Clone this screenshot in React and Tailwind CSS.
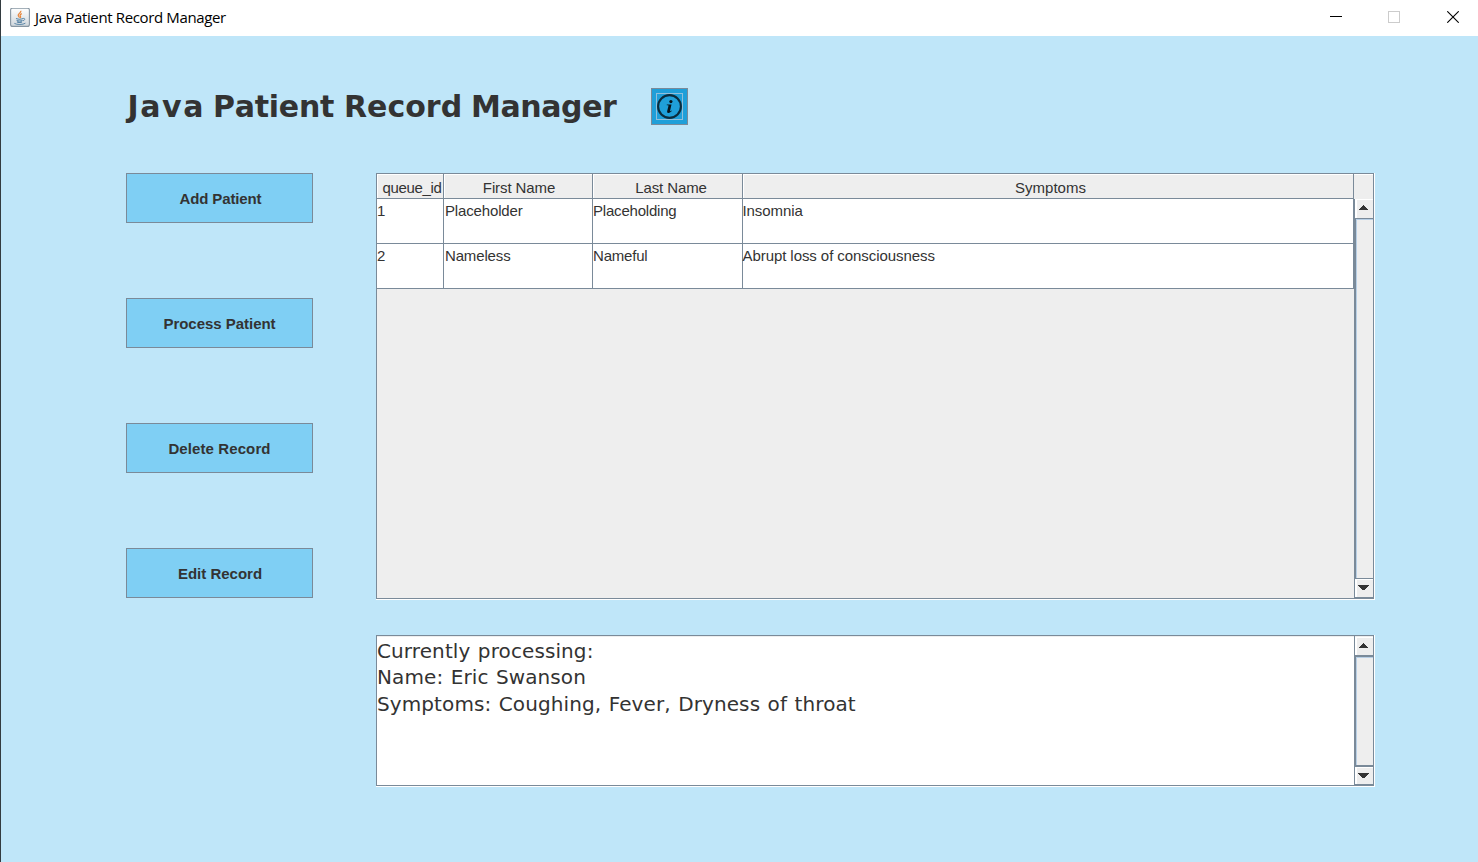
import React from "react";

const titleWords = [
  { text: "Java ", style: "ml-[1.5px] w-[85.5px] tracking-[1.6px]" },
  { text: "Patient ", style: "w-[131px] tracking-[-0.25px]" },
  { text: "Record ", style: "w-[127px]" },
  { text: "Manager", style: "tracking-[-0.4px]" },
];

const headers = [
  { label: "queue_id", cell: "pl-[3px] tracking-[-0.33px]" },
  { label: "First Name", cell: "pl-px tracking-[-0.1px]" },
  { label: "Last Name", cell: "pl-[6px] tracking-[-0.1px]" },
  { label: "Symptoms", cell: "pl-[4px]" },
];

const rows = [
  ["1", "Placeholder", "Placeholding", "Insomnia"],
  ["2", "Nameless", "Nameful", "Abrupt loss of consciousness"],
];

const cellPad = ["tracking-normal", "pl-px tracking-[-0.15px]", "tracking-[-0.2px]", "-indent-[0.5px] tracking-[-0.07px]"];

const actions = [
  { label: "Add Patient", pad: "pl-[2px] tracking-[-0.12px]" },
  { label: "Process Patient", pad: "tracking-[-0.03px]" },
  { label: "Delete Record", pad: "tracking-[0.1px]" },
  { label: "Edit Record", pad: "pl-px" },
];

function JavaIcon() {
  return (
    <svg width="20" height="20" viewBox="0 0 20 20" className="shrink-0" aria-hidden="true">
      <defs>
        <linearGradient id="plate" x1="0" y1="0" x2="0" y2="1">
          <stop offset="0" stopColor="#ffffff" />
          <stop offset="1" stopColor="#cfd6dc" />
        </linearGradient>
      </defs>
      <rect x="0.6" y="0.1" width="18.8" height="18.3" rx="2" fill="url(#plate)" stroke="#8796a3" strokeWidth="1.1" />
      <path d="M10.8 2.8c1 1.700-3.200 2.800-2.600 4.700.2.800 1.100 1.300 1.200 2.300M11.800 5.600c-1.800.8-2.200 1.700-1.300 2.700.4.600.1 1.200-.5 1.700" fill="none" stroke="#e8853a" strokeWidth="1.2" />
      <path d="M6 10.600c1.800.6 5.400.6 7.200 0M6.600 12.400c1.700.6 4.300.6 6 0M7 14c1.600.6 3.700.6 5 0" fill="none" stroke="#5b87a8" strokeWidth="1.1" />
      <path d="M13.200 10.400c2-.4 2.300 1.500-.2 2.400M4.400 15.400c2.400 1.500 8.700 1.400 11-.2" fill="none" stroke="#5b87a8" strokeWidth="1" />
    </svg>
  );
}

function InfoIcon() {
  return (
    <svg width="25" height="25" viewBox="0 0 25 25" aria-hidden="true">
      <circle cx="12.5" cy="12.5" r="11.4" fill="none" stroke="#0b2c3d" strokeWidth="2.1" />
      <circle cx="13.9" cy="7.6" r="1.6" fill="#06141c" />
      <path d="M9.800 10.600h4.700l-1.500 6.300c-.1.600.6.500 1.500-.3l.3.500c-1.200 1.300-2.200 1.900-3.400 1.800-1.200-.1-1.500-.9-1.200-2l1.300-5.100c.1-.5-.5-.6-1.700-.6z" fill="#06141c" />
    </svg>
  );
}

function Arrow({ down }) {
  return (
    <svg width="11" height="5" viewBox="0 0 11 5" shapeRendering="crispEdges" aria-hidden="true">
      <path d={down ? "M0 0h11v1h-1v1h-1v1h-1v1h-1v1H4V4H3V3H2V2H1V1H0z" : "M5 0h1v1h1v1h1v1h1v1h1v1H1V4h1V3h1V2h1V1h1z"} fill="#333333" />
    </svg>
  );
}

function ScrollBar({ table }) {
  return (
    <div className="flex w-[19px] shrink-0 flex-col border-l border-[#7a8a99] bg-[#eeeeee]">
      <div className={(table ? "h-[19px]" : "mt-px h-[18px]") + " flex shrink-0 items-start justify-center border-l-2 border-t border-white pr-[3px] pt-[5px]"}>
        <Arrow />
      </div>
      <div className={(table ? "border-t" : "border-t-2") + " flex grow flex-col border-l border-[#7a8a99]"}>
        <div className={(table ? "border-b" : "border-b-2") + " flex grow flex-col border-[#7a8a99]"}>
          <div className="grow border-l border-t border-[#b8cfe5]" />
        </div>
      </div>
      <div className={(table ? "h-[18px]" : "h-[17px]") + " flex shrink-0 items-start justify-center border-l-2 border-t border-white pr-[3px] pt-[5px]"}>
        <Arrow down />
      </div>
      <div className="h-px shrink-0 bg-[#7a8a99]" />
    </div>
  );
}

export default function App() {
  return (
    <div className="flex h-[862px] w-[1478px] flex-col overflow-hidden border-l border-[#333b40] bg-[#bfe6f9] font-['Liberation_Sans',sans-serif] text-[15px] text-[#333333]">
      <header className="flex h-9 shrink-0 items-center bg-white pl-[9px]">
        <JavaIcon />
        <span className="ml-[5px] whitespace-nowrap pb-[2px] font-['Open_Sans',sans-serif] text-[15px] tracking-[-0.36px] text-black">Java Patient Record Manager</span>
        <div className="ml-auto flex items-center pb-[2px] pr-[19px]">
          <svg width="12" height="12" className="mr-[46px]" shapeRendering="crispEdges" aria-hidden="true"><rect y="5" width="12" height="1" fill="#000" /></svg>
          <svg width="12" height="12" className="mr-[47px]" shapeRendering="crispEdges" aria-hidden="true"><rect x="0.5" y="0.5" width="11" height="11" fill="none" stroke="#cccccc" /></svg>
          <svg width="12" height="12" aria-hidden="true"><path d="M.3.3l11.400 11.400M11.700.3L.3 11.700" stroke="#000" strokeWidth="1.100" /></svg>
        </div>
      </header>

      <div className="flex h-[137px] shrink-0 items-start pl-[125px] pt-[52px]">
        <h1 className="w-[525px] whitespace-pre pt-px font-['DejaVu_Sans',sans-serif] text-[30px] font-bold leading-[36px] [font-kerning:none]">
          {titleWords.map((w) => (
            <span key={w.text} className={"inline-block " + w.style}>{w.text}</span>
          ))}
        </h1>
        <button className="flex h-[37px] w-[37px] items-center justify-center border border-[#7a8a99] bg-[#1f9fd9]">
          <span className="flex h-[27px] w-[27px] items-center justify-center border border-[#8fbfdb]">
            <InfoIcon />
          </span>
        </button>
      </div>

      <main className="flex pl-[125px]">
        <nav className="flex w-[187px] flex-col gap-[75px]">
          {actions.map((a) => (
            <button key={a.label} className={"h-[50px] border border-[#7a8a99] bg-[#7fcff4] pt-[2px] text-center text-[15px] font-bold leading-[18px] " + a.pad}>
              {a.label}
            </button>
          ))}
        </nav>

        <div className="ml-[63px] flex w-[999px] flex-col gap-[35px]">
          <section className="flex h-[427px] flex-col border-b border-r border-white">
            <div className="flex grow flex-col border border-[#7a8a99] bg-[#eeeeee]">
              <div className="flex h-[25px] shrink-0">
                <div className="grid h-[25px] grow grid-cols-[67px_149px_150px_611px]">
                  {headers.map((h) => (
                    <div key={h.label} className="h-[25px] border-b border-r border-[#7a8a99]">
                      <div className={"h-[24px] whitespace-nowrap border-l border-t border-white pt-[3px] text-center leading-[20px] " + h.cell}>{h.label}</div>
                    </div>
                  ))}
                </div>
                <div className="w-[19px] border-t border-white" />
              </div>
              <div className="flex grow">
                <div className="w-[977px]">
                  {rows.map((r) => (
                    <div key={r[0]} className="grid h-[45px] grid-cols-[67px_149px_150px_611px] bg-white">
                      {r.map((c, i) => (
                        <div key={i} className={"border-b border-r border-[#7a8a99] pt-[3px] leading-[18px] " + cellPad[i]}>{c}</div>
                      ))}
                    </div>
                  ))}
                </div>
                <ScrollBar table />
              </div>
            </div>
          </section>

          <section className="flex h-[152px] border-b border-r border-white">
            <div className="flex grow border border-[#7a8a99] bg-white">
              <div className="w-[977px] border-t border-[#eeeeee] pt-[0.5px] font-['DejaVu_Sans',sans-serif] text-[20px] leading-[26.5px] tracking-[0.1px] [word-spacing:1px]">
                <p>Currently processing:</p>
                <p>Name: Eric Swanson</p>
                <p>Symptoms: Coughing, Fever, Dryness of throat</p>
              </div>
              <ScrollBar />
            </div>
          </section>
        </div>
      </main>
    </div>
  );
}
